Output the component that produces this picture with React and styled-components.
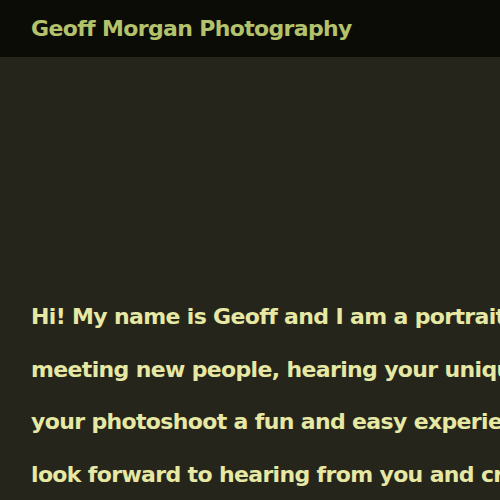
import React from "react";
import styled, { createGlobalStyle } from "styled-components";

const Global = createGlobalStyle`
  html, body { margin: 0; padding: 0; background: #25251b; overflow: hidden; }
  body { font-family: "DejaVu Sans", "Liberation Sans", sans-serif; }
`;

const Page = styled.div`
  width: 500px;
  height: 500px;
  overflow: hidden;
  background: #25251b;
`;

const Header = styled.header`
  height: 57px;
  background: #0c0c07;
  display: flex;
  align-items: center;
  padding-left: 31px;
  box-sizing: border-box;
`;

const Title = styled.h1`
  margin: 0;
  font-size: 22px;
  letter-spacing: -0.65px;
  font-weight: 700;
  color: #b3c26b;
  white-space: nowrap;
`;

const Intro = styled.p`
  margin: 0;
  padding: 234px 0 0 31px;
  font-size: 22px;
  letter-spacing: -0.65px;
  font-weight: 700;
  line-height: 52.7px;
  color: #e6e8a4;
  white-space: nowrap;
`;

export default function App() {
  return (
    <Page>
      <Global />
      <Header>
        <Title>Geoff Morgan Photography</Title>
      </Header>
      <Intro>
        Hi! My name is Geoff and I am a portrait photographer who loves
        <br />
        meeting new people, hearing your unique stories and making
        <br />
        your photoshoot a fun and easy experience for everyone. I
        <br />
        look forward to hearing from you and creating something special.
      </Intro>
    </Page>
  );
}
